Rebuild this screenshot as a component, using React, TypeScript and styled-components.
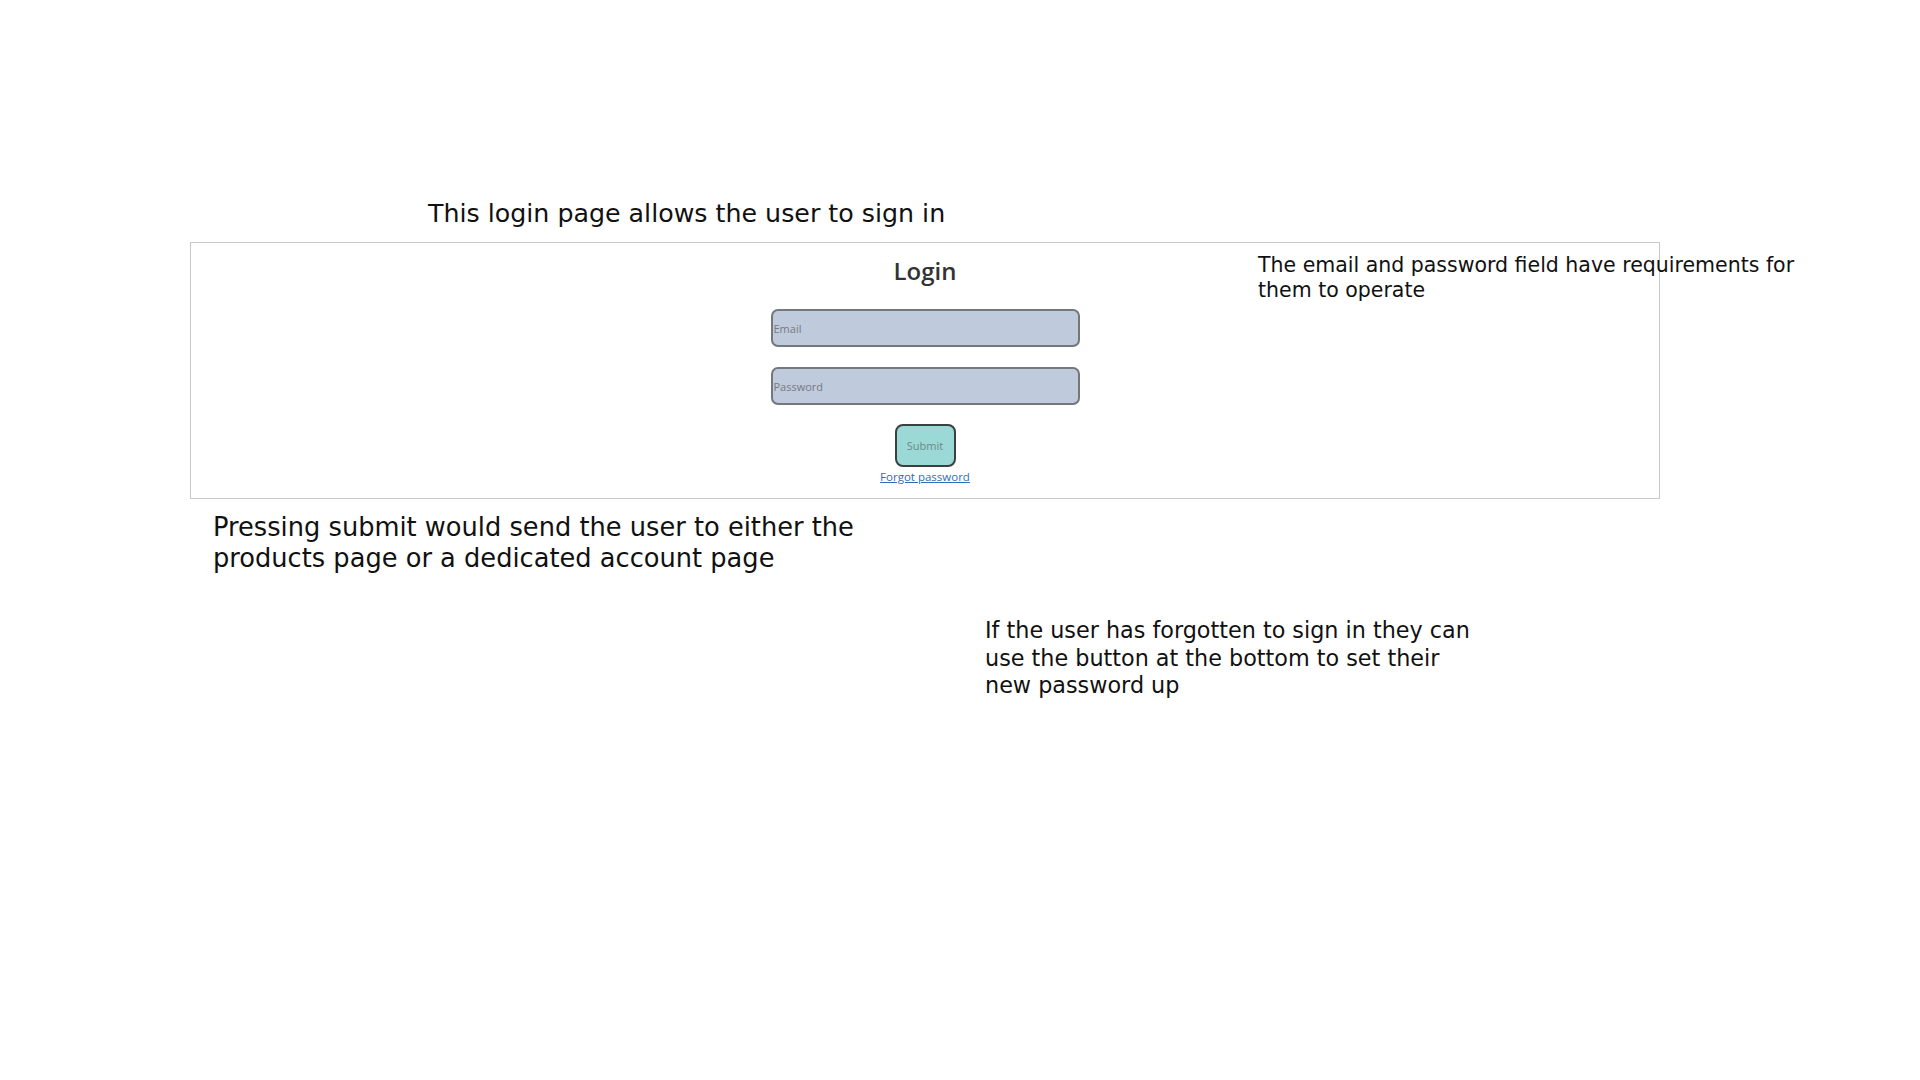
import styled, { createGlobalStyle } from "styled-components";

const GlobalStyle = createGlobalStyle`
    html, body {
        margin: 0;
        padding: 0;
        background: #fff;
    }
    body {
        font-family: "DejaVu Sans", "Open Sans", "Liberation Sans", sans-serif;
        color: #111;
    }
`

export default function App() {
    return (
        <>
            <GlobalStyle />
            <Slide>
                <SlideTitle>This login page allows the user to sign in</SlideTitle>
                <PreviewFrame>
                    <LoginForm>
                        <LoginHeading>Login</LoginHeading>
                        <FieldInput type="email" placeholder="Email" />
                        <FieldInput type="password" placeholder="Password" />
                        <SubmitButton type="button">Submit</SubmitButton>
                        <ForgotLink href="#">Forgot password</ForgotLink>
                    </LoginForm>
                    <FieldNote>
                        The email and password field have requirements for{'\n'}
                        them to operate
                    </FieldNote>
                </PreviewFrame>
                <SubmitNote>
                    Pressing submit would send the user to either the{'\n'}
                    products page or a dedicated account page
                </SubmitNote>
                <ForgotNote>
                    If the user has forgotten to sign in they can{'\n'}
                    use the button at the bottom to set their{'\n'}
                    new password up
                </ForgotNote>
            </Slide>
        </>
    )
}

const Slide = styled.main`
    width: 1920px;
    height: 1080px;
    box-sizing: border-box;
    padding-top: 198px;
    display: flex;
    flex-direction: column;
    align-items: flex-start;
    overflow: hidden;
`

const SlideTitle = styled.h1`
    margin: 0 0 12px 428px;
    font-size: 25.3px;
    font-weight: 400;
    line-height: 32px;
    color: #111;
`

const PreviewFrame = styled.section`
    position: relative;
    margin-left: 190px;
    width: 1470px;
    height: 257px;
    box-sizing: border-box;
    border: 1px solid #c8c8c8;
    background: #fff;
`

const LoginForm = styled.div`
    display: flex;
    flex-direction: column;
    align-items: center;
    padding-top: 13px;
    font-family: "Open Sans", "Noto Sans", sans-serif;
`

const LoginHeading = styled.h2`
    margin: 0 0 23px;
    font-size: 24px;
    font-weight: 600;
    line-height: 30px;
    color: #333;
`

const FieldInput = styled.input`
    width: 309px;
    height: 38px;
    box-sizing: border-box;
    margin-bottom: 20px;
    padding: 0 1px;
    border: 2px solid #74777c;
    border-radius: 7px;
    background: #bfcadd;
    font-family: "Open Sans", "Noto Sans", sans-serif;
    font-size: 11px;
    color: #555;
    outline: none;

    &::placeholder {
        color: #767a80;
    }

    &:last-of-type {
        margin-bottom: 19px;
    }
`

const SubmitButton = styled.button`
    width: 61px;
    height: 43px;
    box-sizing: border-box;
    border: 2px solid #3b3f3f;
    border-radius: 8px;
    background: #9ad9d6;
    font-family: "Open Sans", "Noto Sans", sans-serif;
    font-size: 11px;
    color: #6e8987;
    padding: 0;
    cursor: pointer;
`

const ForgotLink = styled.a`
    margin-top: 2px;
    font-size: 11.5px;
    line-height: 16px;
    color: #2f6dba;
    text-decoration: underline;
`

const FieldNote = styled.p`
    position: absolute;
    top: 10px;
    left: 1067px;
    margin: 0;
    width: 600px;
    font-size: 20.5px;
    line-height: 24.5px;
    color: #111;
    white-space: pre-line;
`

const SubmitNote = styled.p`
    margin: 13px 0 0 213px;
    font-size: 25.7px;
    line-height: 31px;
    color: #111;
    white-space: pre-line;
`

const ForgotNote = styled.p`
    margin: 43px 0 0 985px;
    font-size: 22.3px;
    line-height: 27.5px;
    color: #111;
    white-space: pre-line;
`
